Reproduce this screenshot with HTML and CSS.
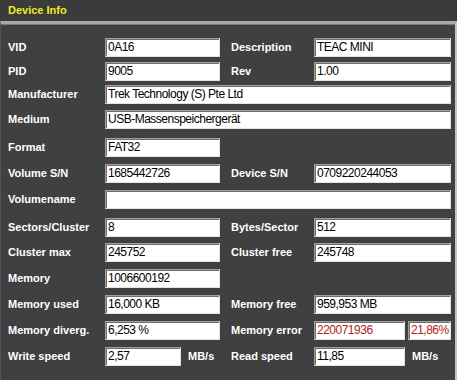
FILE: index.html
```html
<!DOCTYPE html>
<html lang="en">
<head>
    <meta charset="UTF-8">
    <title>Device Info</title>
    <link rel="stylesheet" href="styles.css">
</head>
<body>
    <div class="header">Device Info</div>

    <div class="panel">
        <div class="row">
            <span class="label">VID</span>
            <div class="field">0A16</div>
            <span class="label label-right">Description</span>
            <div class="field">TEAC MINI</div>
        </div>
        <div class="row h23">
            <span class="label">PID</span>
            <div class="field">9005</div>
            <span class="label label-right">Rev</span>
            <div class="field">1.00</div>
        </div>
        <div class="row h25">
            <span class="label">Manufacturer</span>
            <div class="field wide">Trek Technology (S) Pte Ltd</div>
        </div>
        <div class="row h28">
            <span class="label">Medium</span>
            <div class="field wide">USB-Massenspeichergerät</div>
        </div>
        <div class="row h26">
            <span class="label">Format</span>
            <div class="field">FAT32</div>
        </div>
        <div class="row h26">
            <span class="label">Volume S/N</span>
            <div class="field">1685442726</div>
            <span class="label label-right">Device S/N</span>
            <div class="field">0709220244053</div>
        </div>
        <div class="row h28">
            <span class="label">Volumename</span>
            <div class="field wide"></div>
        </div>
        <div class="row h25">
            <span class="label">Sectors/Cluster</span>
            <div class="field">8</div>
            <span class="label label-right">Bytes/Sector</span>
            <div class="field">512</div>
        </div>
        <div class="row h26">
            <span class="label">Cluster max</span>
            <div class="field">245752</div>
            <span class="label label-right">Cluster free</span>
            <div class="field">245748</div>
        </div>
        <div class="row h26">
            <span class="label">Memory</span>
            <div class="field">1006600192</div>
        </div>
        <div class="row h26">
            <span class="label">Memory used</span>
            <div class="field">16,000 KB</div>
            <span class="label label-right">Memory free</span>
            <div class="field">959,953 MB</div>
        </div>
        <div class="row h26">
            <span class="label">Memory diverg.</span>
            <div class="field">6,253 %</div>
            <span class="label label-right">Memory error</span>
            <div class="split">
                <div class="field error">220071936</div>
                <div class="field error">21,86%</div>
            </div>
        </div>
        <div class="row h26">
            <span class="label">Write speed</span>
            <div class="unit-cell">
                <div class="field short">2,57</div>
                <span class="unit">MB/s</span>
            </div>
            <span class="label label-right">Read speed</span>
            <div class="unit-cell">
                <div class="field medium">11,85</div>
                <span class="unit">MB/s</span>
            </div>
        </div>
    </div>
</body>
</html>
```

FILE: styles.css
```css
* {
    margin: 0;
    padding: 0;
    box-sizing: border-box;
}

body {
    font-family: "Liberation Sans", Arial, sans-serif;
    background: #404040;
    color: #ffffff;
    width: 457px;
    height: 380px;
    overflow: hidden;
}

.header {
    height: 21px;
    background: #3b3b3b;
    color: #eeee1e;
    font-size: 11px;
    font-weight: 700;
    padding: 4px 0 0 8px;
}

.panel {
    height: 359px;
    background: #404040;
    border-top: 3px solid #a8a8a8;
    border-left: 1px solid #555555;
    border-right: 2px solid #c4c4c4;
    box-shadow: inset 0 1px 0 #7a7a7a;
    padding-top: 14px;
}

.row {
    display: grid;
    grid-template-columns: 104px 115px 94px 137px;
    align-items: start;
    height: 24px;
}

.h23 { height: 23px; }
.h25 { height: 25px; }
.h26 { height: 26px; }
.h28 { height: 28px; }

.label {
    font-size: 11px;
    font-weight: 700;
    padding-left: 7px;
    line-height: 19px;
    white-space: nowrap;
}

.label-right {
    padding-left: 11px;
}

.field {
    height: 19px;
    background: #ffffff;
    color: #000000;
    font-size: 12px;
    letter-spacing: -0.5px;
    line-height: 16px;
    padding-left: 2px;
    white-space: nowrap;
    overflow: hidden;
    border-top: 1px solid #a0a0a0;
    border-left: 1px solid #a0a0a0;
    border-right: 1px solid #e3e3e3;
    border-bottom: 1px solid #e3e3e3;
    box-shadow: inset 1px 1px 0 #6e6e6e;
}

.wide {
    grid-column: 2 / 5;
}

.split {
    display: flex;
    gap: 3px;
}

.split .field:first-child {
    width: 91px;
}

.split .field:last-child {
    flex: 1;
}

.error {
    color: #b22222;
}

.unit-cell {
    display: flex;
    align-items: center;
    gap: 7px;
}

.short {
    width: 76px;
}

.medium {
    width: 91px;
}

.unit {
    font-size: 11px;
    font-weight: 700;
    line-height: 19px;
}
```
